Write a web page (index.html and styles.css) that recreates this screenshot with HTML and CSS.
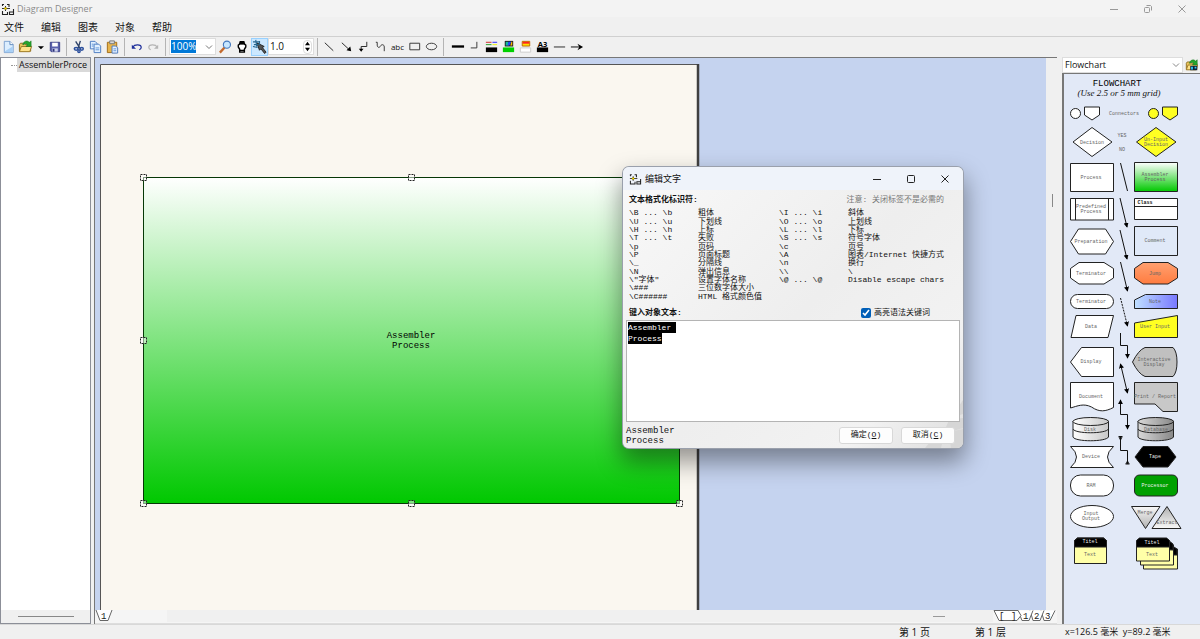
FILE: index.html
```html
<!DOCTYPE html>
<html lang="zh-CN">
<head>
<meta charset="utf-8">
<title>Diagram Designer</title>
<link rel="stylesheet" href="styles.css">
</head>
<body>
<svg class="defs" width="0" height="0" aria-hidden="true">
  <defs>
    <linearGradient id="green" x1="0" y1="0" x2="0" y2="1"><stop offset="0" stop-color="#fff"/><stop offset="1" stop-color="#00c800"/></linearGradient>
    <linearGradient id="blue"><stop offset="0" stop-color="#c0e0ff"/><stop offset="1" stop-color="#7878ff"/></linearGradient>
    <linearGradient id="orange" x1="0" y1="0" x2="0" y2="1"><stop offset="0" stop-color="#ffa070"/><stop offset="1" stop-color="#ff7c40"/></linearGradient>
    <linearGradient id="silver"><stop offset="0" stop-color="#fff"/><stop offset="1" stop-color="#c8c8c8"/></linearGradient>
    <linearGradient id="steel"><stop offset="0" stop-color="#d8d8d8"/><stop offset="1" stop-color="#888"/></linearGradient>
    <linearGradient id="tri" x1="0" y1="0" x2="0" y2="1"><stop offset="0" stop-color="#f8f8f8"/><stop offset="1" stop-color="#b0b0b0"/></linearGradient>
    <linearGradient id="tri2" x1="0" y1="0" x2="0" y2="1"><stop offset="0" stop-color="#b0b0b0"/><stop offset="1" stop-color="#f8f8f8"/></linearGradient>
    <marker id="arrow" viewBox="0 0 6 6" refX="5" refY="3" markerWidth="5" markerHeight="5" markerUnits="userSpaceOnUse" orient="auto-start-reverse"><path d="M0 0L6 3L0 6z"/></marker>
    <symbol id="logo" viewBox="0 0 14 14"><path d="M1.500 4V2.500H3M6 2.500h2V5M1.500 9v3.500h5V10M12.500 7v5.500h-4V10h4" fill="none" stroke="#222" stroke-width="1.100"/><path d="M1 6.500h8M4.500 4v5" stroke="#333" fill="none"/><path d="M4.500 5l1.500 1.500L4.500 8 3 6.500z" fill="#ffe000" stroke="#665500" stroke-width=".5"/></symbol>
    <symbol id="folder" viewBox="0 0 16 16"><path d="M1.500 6l1-1.500h4l1 1.500h6v7h-12z" fill="#e9c45c" stroke="#8a6a1c"/><path d="M1.500 13.500l2-5.500h11l-2 5.500z" fill="#ffe28a" stroke="#9a7624"/><path d="M5 6c1-4 5-5 7-2.500l2-1.500v6H8.500l1.500-2c-1.500-1.500-3-1-4 0z" fill="#25a52c" stroke="#136b1a" stroke-width=".5"/></symbol>
  </defs>
</svg>
<div class="app">
  <header class="titlebar">
    <svg class="logo" width="14" height="14"><use href="#logo"/></svg>
    <span class="app-name">Diagram Designer</span>
    <div class="window-buttons">
      <button aria-label="最小化"><svg width="10" height="10"><path d="M1 5.500h8"/></svg></button>
      <button aria-label="还原"><svg width="10" height="10"><rect x="1.500" y="3.500" width="5" height="5" rx="1"/><path d="M3.500 1.500h4l1 1v4"/></svg></button>
      <button aria-label="关闭"><svg width="10" height="10"><path d="M1.500 1.500l7 7M8.500 1.500l-7 7"/></svg></button>
    </div>
  </header>
  <nav class="menubar">
    <button>文件</button><button>编辑</button><button>图表</button><button>对象</button><button>帮助</button>
  </nav>
  <div class="toolbar">
    <div class="group">
      <button aria-label="新建"><svg viewBox="0 0 16 16"><path d="M3.500 2.500h6l3.500 3.500v8.500h-9.500z" fill="#dceeff" stroke="#7ba0cf"/><path d="M9.500 2.500v3.500h3.500" fill="#fff" stroke="#5b86bd"/><path d="M4 13l8.500-5v6H4z" fill="#a8d0f6"/></svg></button>
      <button aria-label="打开"><svg viewBox="0 0 16 16"><use href="#folder"/></svg></button>
      <button class="narrow" aria-label="最近文件"><svg viewBox="0 0 8 16"><path d="M1 7h7l-3.500 3.500z"/></svg></button>
      <button aria-label="保存"><svg viewBox="0 0 16 16"><path d="M3.500 3.500h10v10h-9l-1-1z" fill="#5a61ad" stroke="#3b4186"/><path d="M5.500 4h6v4h-6z" fill="#fff"/><path d="M5.500 10h6v3.500h-6z" fill="#cfd3ee"/><path d="M6 10.500h2v3H6z" fill="#2e3478"/></svg></button>
    </div>
    <div class="group">
      <button aria-label="剪切"><svg viewBox="0 0 16 16"><path d="M5 2.500l5 8M10 2l-2.500 8" fill="none" stroke="#31456b" stroke-width="1.500"/><g fill="none" stroke="#2b4f9c" stroke-width="1.600"><ellipse cx="5.500" cy="10.500" rx="2" ry="1.500"/><ellipse cx="11.500" cy="10.500" rx="1.600" ry="1.500"/><ellipse cx="8.500" cy="13" rx="1.200" ry="1.500"/></g></svg></button>
      <button aria-label="复制"><svg viewBox="0 0 16 16"><g fill="#e2f0ff" stroke="#4a7ac0"><path d="M2.500 2.500h5l2 2v6h-7z"/><path d="M6.500 5.500h5l2 2v7h-7z"/></g><path d="M4 5.500h2M4 7.500h2M8 9.500h4M8 11.500h4" stroke="#5d93d8"/></svg></button>
      <button aria-label="粘贴"><svg viewBox="0 0 16 16"><path d="M2.500 3.500h10v11h-10z" fill="#e7b44c" stroke="#a06c18"/><path d="M5 2h5v3H5z" fill="#d8d8d8" stroke="#777"/><path d="M7.500 7.500h4l2 2v5.500h-6z" fill="#e8f2ff" stroke="#4a7ac0"/><path d="M9 10.500h3M9 12.500h3" stroke="#5d93d8"/></svg></button>
    </div>
    <div class="group">
      <button aria-label="撤销"><svg viewBox="0 0 16 16" fill="none" stroke="#1c2d9a" stroke-width="1.300"><path d="M4 8.500c2-3 9-3 9 .5 0 1.500-1 2-2 2.500"/><path d="M3 6v4.500h4.500z" fill="#1c2d9a" stroke="none"/></svg></button>
      <button aria-label="重做"><svg viewBox="0 0 16 16" fill="none" stroke="#b4b4b4" stroke-width="1.300"><path d="M12 8.500c-2-3-9-3-9 .5 0 1.500 1 2 2 2.500"/><path d="M13 6v4.500H8.500z" fill="#b4b4b4" stroke="none"/></svg></button>
    </div>
    <div class="group">
      <div class="combo zoom"><input aria-label="缩放" value="100%"><button aria-label="选择缩放"><svg viewBox="0 0 8 8"><path d="M1 2.500l3 3 3-3" fill="none" stroke="#777"/></svg></button></div>
      <button aria-label="放大镜"><svg viewBox="0 0 16 16"><path d="M2 14.500l5-5.500" stroke="#c46a2d" stroke-width="2.500"/><circle cx="9.500" cy="6" r="3.800" fill="#c6e6ff" stroke="#4478bd" stroke-width="1.200"/></svg></button>
      <button aria-label="平移"><svg viewBox="0 0 16 16"><path d="M5 14v-3L3.500 8.500v-2L5.500 5h4l2 1.500v2L10 11v3z" fill="#fff" stroke="#000" stroke-width="1.500"/><path d="M5 2h5l1 3.500H4zM4.500 11.500h6V13h-6z"/></svg></button>
      <button class="active" aria-label="选择"><svg viewBox="0 0 16 16"><path d="M5 4l8 4-2 1 4 5-1.500 1.500-4-5L8 12z" fill="#555" stroke="#222"/><path d="M1 3h7M2 6h5M4 1l1 7M8 2v4M1 8l5 1" stroke="#27678f" fill="none" stroke-width="1.200"/></svg></button>
      <div class="combo width"><input aria-label="线宽" value="1.0"><div class="spin"><button aria-label="增加"><svg viewBox="0 0 8 6"><path d="M1 5h6L4 1z"/></svg></button><button aria-label="减少"><svg viewBox="0 0 8 6"><path d="M1 1h6L4 5z"/></svg></button></div></div>
    </div>
    <div class="group">
      <button aria-label="直线"><svg viewBox="0 0 16 16"><path d="M3 4l9 8.500" stroke="#222"/></svg></button>
      <button aria-label="箭头"><svg viewBox="0 0 16 16"><path d="M3 4l7 6.500" stroke="#222"/><path d="M13 13l-5-1 4-4z"/></svg></button>
      <button aria-label="折线"><svg viewBox="0 0 16 16"><path d="M11.500 3v5h-6v4" fill="none" stroke="#222"/><path d="M3 10.500h5l-2.500 3z"/></svg></button>
      <button aria-label="曲线"><svg viewBox="0 0 16 16"><path d="M3 3.500h1.500v3c0 3 2.500 3 3.500 1s4-2 4 1v4.500" fill="none" stroke="#333"/></svg></button>
      <button class="abc" aria-label="文字">abc</button>
      <button aria-label="矩形"><svg viewBox="0 0 16 16"><path d="M3 4.500h10.500v7H3z" fill="none" stroke="#333"/></svg></button>
      <button aria-label="椭圆"><svg viewBox="0 0 16 16"><ellipse cx="8" cy="8" rx="5.500" ry="3.500" fill="none" stroke="#333"/></svg></button>
    </div>
    <div class="group styles">
      <button aria-label="线型"><svg viewBox="0 0 16 16"><path d="M2 8h13" stroke="#000" stroke-width="2.500"/></svg></button>
      <button aria-label="拐角"><svg viewBox="0 0 16 16"><path d="M4 9.500h6.500V3" fill="none" stroke="#333"/></svg></button>
      <button aria-label="线条颜色"><svg viewBox="0 0 16 16"><path d="M2 9h12v5H2z"/><path d="M2 3.500h6" stroke="#c22"/><path d="M2 6h6" stroke="#292"/><path d="M9 3.500h5" stroke="#22f"/><path d="M9 6h5" stroke="#ee0"/></svg></button>
      <button aria-label="填充颜色"><svg viewBox="0 0 16 16"><path d="M2 9h12v5H2z" fill="#00d000"/><path d="M4 2h9v6H4z" fill="#222"/><path d="M5 3h3v4H5z" fill="#1b9"/><path d="M8 3l3 0-2 4H7z" fill="#24f"/><path d="M11 3h1v4h-2z" fill="#fb0"/></svg></button>
      <button aria-label="渐变颜色"><svg viewBox="0 0 16 16"><path d="M2.500 9.500h11v4.500h-11z" fill="#fff" stroke="#ccc"/><path d="M4.500 2.500h8v5h-8z" fill="#ffe000" stroke="#b60"/><path d="M5 3h7v2H5z" fill="#f22"/></svg></button>
      <button aria-label="文字颜色"><svg viewBox="0 0 16 16"><path d="M2 9h12v5H2z"/><text x="3" y="8" font-size="8" font-weight="bold">A3</text></svg></button>
      <button aria-label="线端"><svg viewBox="0 0 16 16"><path d="M2 8.500h12" stroke="#222"/></svg></button>
      <button aria-label="箭头样式"><svg viewBox="0 0 16 16"><path d="M2 8.500h11" stroke="#000"/><path d="M9 5l6 3.500L9 12l2-3.500z"/></svg></button>
    </div>
  </div>

  <main class="workspace">
    <aside class="tree">
      <div class="tree-list"><a class="tree-item" href="#page">AssemblerProce</a></div>
      <div class="tree-scroll"><i></i></div>
    </aside>

    <section class="editor" id="page">
      <div class="canvas">
        <svg class="drawing" viewBox="95 58 605 553" width="605" height="553">
          <path d="M100 64h597.500v547H100z" fill="#faf7f0"/>
          <path d="M100.500 611V64.500H697" fill="none" stroke="#555"/>
          <path d="M698 64v547" stroke="#404040" stroke-width="2.500"/>
          <rect x="143.500" y="177.500" width="536" height="326" fill="url(#green)" stroke="#063806"/>
          <g class="label big"><text x="411" y="338">Assembler</text><text x="411" y="348">Process</text></g>
          <g fill="#ffffff80" stroke="#222" stroke-dasharray="2 1">
            <rect x="140.500" y="174.500" width="6" height="6"/><rect x="408.500" y="174.500" width="6" height="6"/>
            <rect x="140.500" y="337.500" width="6" height="6"/><rect x="140.500" y="500.500" width="6" height="6"/>
            <rect x="408.500" y="500.500" width="6" height="6"/><rect x="676.500" y="500.500" width="6" height="6"/>
          </g>
        </svg>
      </div>
      <div class="vscroll"><i></i></div>
      <div class="tabs">
        <button class="page-tab" aria-label="第 1 页"><svg width="18" height="12"><path d="M1 0l4 10.500h8L17 0" fill="#fff" stroke="#666"/><text x="6" y="9">1</text></svg></button>
        <div class="hscroll"><i></i></div>
        <button class="layer-tabs" aria-label="图层"><svg width="64" height="12"><g fill="#fff" stroke="#666"><path d="M48 .500l3 10h6L62 .500"/><path d="M37 .500l3 10h7l4-10"/><path d="M25 .500l4 10h7l4-10"/><path d="M1 .500l5 10h18l4-5-3-5z"/></g><text x="6" y="9">[</text><text x="18" y="9">]</text><text x="30" y="9">1</text><text x="41" y="9">2</text><text x="52" y="9">3</text></svg></button>
      </div>
    </section>

    <aside class="palette">
      <div class="palette-head">
        <div class="select-wrap"><select aria-label="模板"><option>Flowchart</option></select><svg width="8" height="8" viewBox="0 0 8 8"><path d="M1 2.500l3 3 3-3" fill="none" stroke="#888"/></svg></div>
        <button aria-label="打开模板"><svg width="14" height="14" viewBox="0 0 16 16"><use href="#folder"/><path d="M6 9h8v5H6z" fill="#123"/><path d="M7 10h2v3H7zM11 10h2v2h-2z" fill="#3cf"/></svg></button>
      </div>
      <div class="palette-body">
        <svg viewBox="1064 74 134 500" width="134" height="500">
          <g class="shape">
            <circle cx="1075.500" cy="113.500" r="5"/><path d="M1084.500 107h15v8l-7.500 5-7.500-5z"/>
            <g fill="#ff2"><circle cx="1153.500" cy="113.500" r="5"/><path d="M1162.500 107h15v8l-7.500 5-7.500-5zM1156 127.500l20 14.500-20 14.500-19.500-14.500z"/></g>
            <path d="M1092 127.500l20 14.500-20 14.500-19-14.500z"/>
            <path d="M1070.500 163.500h43v28h-43z"/><path d="M1134.500 162.500h43v29h-43z" fill="url(#green)"/>
            <path d="M1070.500 198.500h43v21.500h-43zM1075.500 198.500v21.500M1108.500 198.500v21.500M1134.500 198.500h43v21h-43zM1134.500 206.500h43"/>
            <path d="M1070.500 241.500l8-12.500h27l8 12.500-8 12.500h-27z"/><path d="M1134.500 226.500h43v29h-43z" fill="#e0e9f8"/>
            <path d="M1079 262.500h25l9.500 6v9.500l-9.500 6h-25l-8.500-6v-9.500z"/><path d="M1143 262.500h25l9.500 6v9.500l-9.500 6h-25l-8.500-6v-9.500z" fill="url(#orange)"/>
            <rect x="1070.500" y="294.500" width="43" height="14" rx="7"/><path d="M1134.500 300l11-5.500h32v14h-43z" fill="url(#blue)"/>
            <path d="M1076 315.500h37.500l-5.500 22h-37z"/><path d="M1134.500 323l43-7.500v22h-43z" fill="#ff2"/>
            <path d="M1070.500 362l11-14.500h32v29h-32z"/><path d="M1132.500 362q6-12 12.500-14.500h28q4 4 4 14.500t-4 14.500h-28q-6.500-2.500-12.500-14.500z" fill="#c0c0c0"/>
            <path d="M1070.500 382.500h43v25c-8 4-14 5-22-.5-8-4-14-1-21 1z"/><path d="M1134.500 382.500h43v29h-14.500l-8-7.500h-20.500z" fill="#c8c8c8"/>
            <g fill="url(#silver)"><path d="M1073 421v16c2 5 33 5 35.500 0v-16z"/><ellipse cx="1090.750" cy="421.500" rx="17.750" ry="4"/><path d="M1073 429c2 5 33 5 35.500 0" fill="none"/></g>
            <g fill="url(#steel)"><path d="M1138 421v16c2 5 33 5 35.500 0v-16z"/><ellipse cx="1155.750" cy="421.500" rx="17.750" ry="4"/><path d="M1138 429c2 5 33 5 35.500 0" fill="none"/></g>
            <path d="M1070.500 446.500h43q-12 10.500 0 21h-43q12-10.500 0-21z"/><path d="M1135 457l8-10.500h25l8 10.500-8 10h-25z" fill="#000"/>
            <rect x="1070.500" y="475" width="43" height="21" rx="10"/><rect x="1134.500" y="475" width="43" height="21" rx="5" fill="#00a000"/>
            <ellipse cx="1092" cy="516.500" rx="21.500" ry="11"/><path d="M1131.500 506.500h28.500l-14.500 22z" fill="url(#tri)"/><path d="M1167 506.500l14 22h-29z" fill="url(#tri2)"/>
            <path d="M1074.500 563.500v-23l3-2.500h26l3 2.500v23z" fill="#ffffa8"/><path d="M1074.500 547v-6.500l3-2.500h26l3 2.500v6.500z" fill="#000"/>
            <path d="M1143.500 569v-20h34v20z" fill="#ffffa8"/><path d="M1150 555v-10h21l6 4v6z" fill="#000"/>
            <path d="M1140.500 565v-20h33v20z" fill="#ffffa8"/><path d="M1150 549v-9h18l5 4v6z" fill="#000"/>
            <path d="M1136.500 561v-20l3-2.500h27l3 2.500v20z" fill="#ffffa8"/><path d="M1136.500 547v-6.500l3-2.500h27l3 2.500v6.500z" fill="#000"/>
          </g>
          <g class="links">
            <path d="M1120.500 163l7 28"/>
            <path d="M1120 198l7 29" marker-end="url(#arrow)"/><path d="M1120 230l7 29" marker-end="url(#arrow)"/><path d="M1120.500 262l7 29" marker-end="url(#arrow)"/>
            <path d="M1120.500 298l7 28" stroke-dasharray="2 1" marker-end="url(#arrow)"/>
            <path d="M1120.500 333v12.500h7V358" marker-end="url(#arrow)"/>
            <path d="M1120.500 364l7 29" marker-start="url(#arrow)" marker-end="url(#arrow)"/>
            <path d="M1120.500 400v14.500h7V429" marker-start="url(#arrow)" marker-end="url(#arrow)"/>
            <path d="M1120.500 437v13.500h7V464M1118.500 436.500h4M1125.500 464h4M1119 437l1.500 3 1.500-3M1126 464l1.500-3 1.500 3"/>
          </g>
          <g class="label big"><text x="1117" y="86">FLOWCHART</text></g>
          <text class="subtitle" x="1119" y="96">(Use 2.5 or 5 mm grid)</text>
          <g class="label">
            <text x="1124" y="115">Connectors</text><text x="1092" y="144">Decision</text><text x="1122" y="137">YES</text><text x="1122" y="151">NO</text>
            <text x="1156" y="141">Un-Input</text><text x="1156" y="146">Decision</text><text x="1091" y="179">Process</text><text x="1155" y="176">Assembler</text><text x="1155" y="181">Process</text>
            <text x="1091" y="208">Predefined</text><text x="1091" y="213">Process</text><text x="1145" y="204" class="strong">Class</text>
            <text x="1091" y="243">Preparation</text><text x="1155" y="242">Comment</text><text x="1091" y="275">Terminator</text><text x="1155" y="275">Jump</text>
            <text x="1091" y="303">Terminator</text><text x="1155" y="303">Note</text><text x="1091" y="328">Data</text><text x="1155" y="328">User Input</text>
            <text x="1091" y="363">Display</text><text x="1154" y="361">Interactive</text><text x="1154" y="366">Display</text>
            <text x="1091" y="398">Document</text><text x="1155" y="398">Print / Report</text><text x="1090" y="431">Disk</text><text x="1156" y="431">Database</text>
            <text x="1091" y="458">Device</text><text x="1155" y="458" class="light">Tape</text><text x="1091" y="487">RAM</text><text x="1155" y="487" class="light">Processor</text>
            <text x="1091" y="515">Input</text><text x="1091" y="520">Output</text><text x="1145" y="514">Merge</text><text x="1167" y="524">Extract</text>
            <text x="1090" y="543" class="light">Titel</text><text x="1090" y="556">Text</text><text x="1152" y="544" class="light">Titel</text><text x="1152" y="556">Text</text>
          </g>
        </svg>
      </div>
    </aside>
  </main>

  <footer class="statusbar"><span class="st-page">第 1 页</span><span class="st-layer">第 1 层</span><span class="st-pos">x=126.5 毫米&nbsp; y=89.2 毫米</span></footer>
</div>

<div class="dialog" role="dialog" aria-labelledby="dlg-title">
  <div class="dialog-title">
    <svg class="logo" width="13" height="14"><use href="#logo"/></svg>
    <span id="dlg-title">编辑文字</span>
    <div class="window-buttons">
      <button aria-label="最小化"><svg width="10" height="10"><path d="M1 5.500h8"/></svg></button>
      <button aria-label="最大化"><svg width="10" height="10"><rect x="1.500" y="1.500" width="7" height="7" rx="1"/></svg></button>
      <button aria-label="关闭"><svg width="10" height="10"><path d="M1.500 1.500l7 7M8.500 1.500l-7 7"/></svg></button>
    </div>
  </div>
  <div class="dialog-body">
    <div class="row help-head"><strong>文本格式化标识符:</strong><span class="note">注意: 关闭标签不是必需的</span></div>
    <table class="codes">
      <colgroup><col class="c-code"><col class="c-desc"><col class="c-code"><col></colgroup>
      <tbody>
      <tr><td>\B ... \b</td><td>粗体</td><td>\I ... \i</td><td>斜体</td></tr>
      <tr><td>\U ... \u</td><td>下划线</td><td>\O ... \o</td><td>上划线</td></tr>
      <tr><td>\H ... \h</td><td>上标</td><td>\L ... \l</td><td>下标</td></tr>
      <tr><td>\T ... \t</td><td>失败</td><td>\S ... \s</td><td>符号字体</td></tr>
      <tr><td>\p</td><td>页码</td><td>\c</td><td>页号</td></tr>
      <tr><td>\P</td><td>页面标题</td><td>\A</td><td>图表/Internet 快捷方式</td></tr>
      <tr><td>\_</td><td>分隔线</td><td>\n</td><td>换行</td></tr>
      <tr><td>\N</td><td>弹出信息</td><td>\\</td><td>\</td></tr>
      <tr><td>\"字体"</td><td>设置字体名称</td><td>\@ ... \@</td><td>Disable escape chars</td></tr>
      <tr><td>\###</td><td>三位数字体大小</td><td></td><td></td></tr>
      <tr><td>\C######</td><td>HTML 格式颜色值</td><td></td><td></td></tr>
      </tbody>
    </table>
    <div class="row field-head"><label class="strong-label" for="object-text">键入对象文本:</label><label class="check"><input type="checkbox" checked>高亮语法关键词</label></div>
    <textarea id="object-text" spellcheck="false">Assembler
Process</textarea>
    <div class="row dialog-foot">
      <svg class="pattern" width="60" height="48" aria-hidden="true"><path d="M60 0v14L48 18zM46 20l14-2v10L40 34zM32 36l10-3-4 15H22zM46 32l14-3v19H48z"/></svg>
      <div class="preview">Assembler<br>Process</div>
      <button class="btn">确定(<u>O</u>)</button><button class="btn">取消(<u>C</u>)</button>
    </div>
  </div>
</div>
<script src="app.js"></script>
</body>
</html>
```
FILE: styles.css
```css
* { box-sizing: border-box; }
body {
  margin: 0;
  height: 100vh;
  overflow: hidden;
  font: 10px/14px "Open Sans", "Noto Sans CJK SC", sans-serif;
  color: #111;
  background: #f0f0f0;
}
button, input, select, textarea { font: inherit; color: inherit; margin: 0; padding: 0; border: 0; background: none; border-radius: 0; outline: 0; }
svg { display: block; }
.defs { position: absolute; }
.app { display: flex; flex-direction: column; height: 100vh; }

.titlebar { display: flex; align-items: center; height: 17px; padding: 0 0 0 1px; gap: 2px; background: #f3f3f3; font-size: 9px; color: #8a8a8a; }
.window-buttons { display: flex; margin-left: auto; }
.window-buttons button { width: 34px; height: 16px; display: grid; place-items: center; }
.window-buttons svg { fill: none; stroke: #999; }
.titlebar .window-buttons { margin-right: 1px; }

.menubar { display: flex; align-items: center; gap: 17px; height: 19px; padding: 0 4px; }
.menubar button { line-height: 14px; }

.toolbar { display: flex; align-items: center; height: 20px; border-top: 1px solid #d0d0d0; flex: none; }
.group { display: flex; align-items: center; height: 18px; }
.group + .group { margin-left: 3px; padding-left: 3px; border-left: 1px solid #b4b4b4; }
.toolbar .group.styles { padding-left: 5px; }
.toolbar .group > button { width: 17px; height: 18px; display: grid; place-items: center; }
.toolbar .group > button > svg { width: 15px; height: 15px; }
.toolbar .group > button.narrow { width: 12px; }
.toolbar .group > button.narrow > svg { width: 7px; height: 14px; }
.toolbar .group > button.active { background: #cce8ff; box-shadow: inset 0 0 0 1px #99d1ff; }
.toolbar .group > button.abc { font-size: 8px; }
.combo { display: flex; align-items: center; height: 17px; background: #fff; border: 1px solid #ddd; }
.combo input { min-width: 0; height: 13px; line-height: 13px; }
.zoom { width: 47px; margin-right: 1px; padding-left: 1px; }
.zoom input { width: 25px; background: #0078d7; color: #fff; font-size: 10px; }
.zoom button { width: 18px; display: grid; place-items: center; }
.zoom button svg { width: 8px; height: 8px; margin-left: 8px; }
.width { width: 46px; }
.width input { width: 34px; padding-left: 1px; }
.spin { display: flex; flex-direction: column; width: 9px; height: 14px; border: 1px solid #ddd; border-radius: 4px; }
.spin button { flex: 1; display: grid; place-items: center; }
.spin svg { width: 7px; height: 5px; }

.workspace { flex: 1; min-height: 0; display: grid; grid-template-columns: 91px 1fr 138px; column-gap: 3px; padding-top: 1px; }
.tree { display: flex; flex-direction: column; min-height: 0; background: #fff; border: 1px solid #8c8f98; }
.tree-list { flex: 1; overflow: hidden; padding-left: 10px; display: flex; align-items: flex-start; }
.tree-list::before { content: ""; flex: none; width: 6px; margin-top: 7px; border-top: 1px dotted #999; }
.tree-item { flex: 1; padding: 0 2px; background: #d9d9d9; color: #111; text-decoration: none; white-space: nowrap; font-size: 9px; line-height: 14px; }
.tree-scroll { height: 13px; background: #f0f0f0; display: grid; place-items: center; }
.tree-scroll i { width: 56px; height: 1px; background: #888; }

.editor { display: grid; grid-template: 1fr 14px / 1fr 11px; min-height: 0; margin-right: 2px; border-left: 1px solid #777; border-top: 1px solid #777; }
.canvas { position: relative; overflow: hidden; background: #c5d3ef; }
.drawing { position: absolute; left: 0; top: 0; }
.vscroll { background: #f0f0f0; }
.vscroll i { display: block; width: 1px; height: 13px; margin: 136px auto 0 6px; background: #888; }
.tabs { grid-column: 1 / 3; display: flex; align-items: flex-start; background: #f5f5f5; border-bottom: 1px solid #ddd; }
.tabs text { font: 9px "Liberation Mono", monospace; fill: #222; }
.hscroll { flex: 1; height: 12px; margin-left: 54px; background: #f0f0f0; display: flex; justify-content: flex-end; align-items: center; }
.hscroll i { width: 12px; height: 1px; margin-right: 48px; background: #999; }

.palette { display: flex; flex-direction: column; min-height: 0; }
.palette-head { display: flex; height: 16px; align-items: center; }
.select-wrap { flex: 1; display: flex; align-items: center; height: 16px; background: #fff; border: 1px solid #ddd; padding-right: 2px; }
.select-wrap select { flex: 1; appearance: none; padding-left: 2px; line-height: 14px; font-size: 9px; }
.palette-head button { width: 17px; display: grid; place-items: center; }
.palette-body { flex: 1; overflow: hidden; background: #e2e9f7; border: solid #777; border-width: 1px 0 0 2px; }
.shape { fill: #fff; stroke: #222; stroke-width: 1; }
.links { fill: none; stroke: #111; stroke-width: 1; }
.label { font: 5px "Liberation Mono", monospace; text-anchor: middle; fill: #666; }
.label .strong { font-weight: bold; fill: #222; }
.label .light { fill: #eee; }
.label.big { font-size: 9px; fill: #000; }
.subtitle { font: italic 9px "Liberation Serif", serif; text-anchor: middle; fill: #111; }

.statusbar { flex: none; display: grid; grid-template-columns: 76px 90px 135px; justify-content: end; height: 15px; border-top: 1px solid #d8d8d8; line-height: 14px; }
.st-pos { font-size: 9px; white-space: nowrap; }

.dialog {
  position: absolute; left: 623px; top: 167px; width: 340px;
  border-radius: 6px; overflow: hidden; background: #f0f0f0;
  box-shadow: 0 0 0 1px #9aa0ac, 0 12px 24px 2px rgba(0, 0, 0, .4);
  font: 8px/8px "Liberation Mono", "Noto Sans CJK SC", monospace;
}
.dialog-title { display: flex; align-items: center; height: 23px; padding: 0 1px 0 6px; gap: 3px; background: #eff3fa; font: 9px/14px "Open Sans", "Noto Sans CJK SC", sans-serif; }
.dialog-title .window-buttons svg { stroke: #222; }
.dialog-body { padding: 3px 3px 0; background: linear-gradient(135deg, #f8f8f8, #eee 50%, #f2f2f2 80%, #ddd); }
.row { display: flex; align-items: center; }
.help-head { height: 14px; padding: 0 16px 0 3px; justify-content: space-between; }
.note { color: #777; }
.codes { width: 331px; height: 92px; margin: 2px 0 0 3px; border-collapse: collapse; table-layout: fixed; }
.codes td { padding: 0; white-space: nowrap; }
.c-code { width: 69px; }
.c-desc { width: 81px; }
.field-head { height: 19px; padding: 5px 30px 0 3px; justify-content: space-between; }
.strong-label { font-weight: bold; }
.check { display: flex; align-items: center; gap: 3px; }
.check input { width: 10px; height: 10px; accent-color: #005fb8; }
textarea { position: relative; z-index: 1; display: block; width: 100%; height: 102px; border: 1px solid #b4b4b4; background: #fff; padding: 1px; resize: none; line-height: 11px; }
textarea::selection { background: #000; color: #fff; }
.dialog-foot { position: relative; height: 26px; gap: 8px; padding-right: 5px; }
.preview { flex: 1; padding-top: 2px; font-size: 9px; line-height: 10px; }
.btn { position: relative; width: 54px; height: 17px; background: #fdfdfd; border: 1px solid #d8d8d8; border-radius: 3px; }
.pattern { position: absolute; right: -3px; bottom: 0; fill: #d6d6d6; }
```
FILE: app.js
```js
const box = document.getElementById("object-text");
box.focus({ preventScroll: true });
box.select();
```
